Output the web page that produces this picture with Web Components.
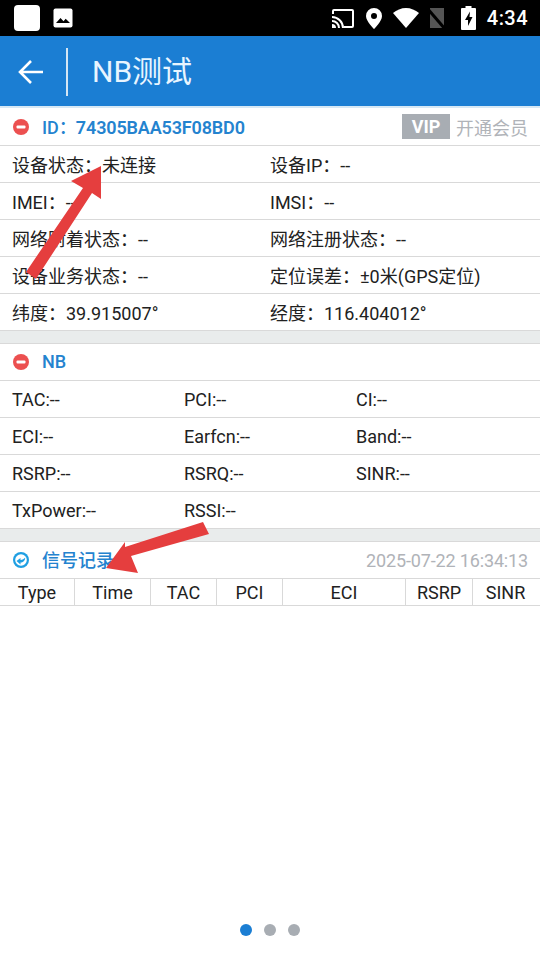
<!DOCTYPE html>
<html lang="zh">
<head>
<meta charset="utf-8">
<title>NB测试</title>
<style>
    html, body { margin: 0; padding: 0; background: #fff; }
    body {
        position: relative;
        width: 540px;
        height: 960px;
        overflow: hidden;
        font-family: Roboto, "Noto Sans CJK SC", sans-serif;
    }
    nb-page { height: 960px; }
    .num { letter-spacing: -.15px; margin-left: -1px; font-weight: 600; }
</style>
</head>
<body>
<nb-page>
    <status-bar></status-bar>
    <app-bar>NB测试</app-bar>

    <section-head icon="minus" style="height:38px">
        ID：<span class="num">74305BAA53F08BD0</span>
        <vip-tag slot="end"></vip-tag>
    </section-head>
    <info-row cols="2"><span>设备状态：未连接</span><span>设备IP：--</span></info-row>
    <info-row cols="2"><span>IMEI：--</span><span>IMSI：--</span></info-row>
    <info-row cols="2"><span>网络附着状态：--</span><span>网络注册状态：--</span></info-row>
    <info-row cols="2"><span>设备业务状态：--</span><span>定位误差：±0米(GPS定位)</span></info-row>
    <info-row cols="2"><span>纬度：39.915007°</span><span>经度：116.404012°</span></info-row>
    <section-gap></section-gap>

    <section-head icon="minus">NB</section-head>
    <info-row cols="3"><span>TAC:--</span><span>PCI:--</span><span>CI:--</span></info-row>
    <info-row cols="3"><span>ECI:--</span><span>Earfcn:--</span><span>Band:--</span></info-row>
    <info-row cols="3"><span>RSRP:--</span><span>RSRQ:--</span><span>SINR:--</span></info-row>
    <info-row cols="3"><span>TxPower:--</span><span>RSSI:--</span></info-row>
    <section-gap></section-gap>

    <section-head icon="refresh">信号记录<span slot="end" class="stamp">2025-07-22 16:34:13</span></section-head>
    <record-table></record-table>

    <page-dots></page-dots>
</nb-page>
<red-arrows></red-arrows>

<script>
class NbPage extends HTMLElement {
    connectedCallback() {
        this.attachShadow({ mode: 'open' });
        this.shadowRoot.innerHTML = `
            <style>
                :host { display: flex; flex-direction: column; }
                ::slotted(page-dots) { margin-top: auto; }
            </style>
            <slot></slot>`;
    }
}

class StatusBar extends HTMLElement {
    connectedCallback() {
        this.attachShadow({ mode: 'open' });
        this.shadowRoot.innerHTML = `
            <style>
                :host {
                    display: flex;
                    align-items: center;
                    height: 36px;
                    flex: none;
                    background: #000;
                    color: #fff;
                    padding: 0 12px 0 14px;
                    box-sizing: border-box;
                }
                .app { width: 26px; height: 26px; border-radius: 4px; background: #fff; margin-right: 13px; }
                svg { display: block; flex: none; }
                .spacer { flex: 1; }
                .time { font: 500 20px Roboto, sans-serif; margin-left: 11px; letter-spacing: .45px; }
            </style>
            <div class="app"></div>
            <svg width="20" height="20" viewBox="0 0 20 20">
                <rect x="0.5" y="0.5" width="19" height="19" rx="2" fill="#fff"/>
                <path d="M3 15l4.5-5 3 3.2 2.2-2.4L17 15z" fill="#000"/>
            </svg>
            <div class="spacer"></div>
            <svg width="22" height="19" viewBox="0 0 22 19" style="margin-right:12px">
                <path d="M2 0h18a2 2 0 0 1 2 2v15a2 2 0 0 1-2 2h-8v-2h8V2H2v3H0V2a2 2 0 0 1 2-2z" fill="#fff"/>
                <path d="M0 7a12 12 0 0 1 12 12H10A10 10 0 0 0 0 9zM0 11a8 8 0 0 1 8 8H6a6 6 0 0 0-6-6zM0 15a4 4 0 0 1 4 4H0z" fill="#fff"/>
            </svg>
            <svg width="16" height="21" viewBox="0 0 16 21" style="margin-right:11px">
                <path fill-rule="evenodd" d="M8 0a8 8 0 0 0-8 8c0 5.500 8 13 8 13s8-7.500 8-13a8 8 0 0 0-8-8zm0 5a3 3 0 1 1 0 6 3 3 0 0 1 0-6z" fill="#fff"/>
            </svg>
            <svg width="26" height="20" viewBox="0 0 26 20" style="margin-right:9px">
                <path d="M13 20L0 5C3.600 2 8.200 0 13 0s9.400 2 13 5z" fill="#fff"/>
            </svg>
            <svg width="18" height="20" viewBox="0 0 18 20" style="margin-right:15px">
                <path d="M2 0h14v20H2z" fill="#555"/>
                <path d="M-1 0L17 21" stroke="#000" stroke-width="3"/>
            </svg>
            <svg width="15" height="24" viewBox="0 0 15 24">
                <path fill-rule="evenodd" d="M4.500 0h6v2H14a1 1 0 0 1 1 1v20a1 1 0 0 1-1 1H1a1 1 0 0 1-1-1V3a1 1 0 0 1 1-1h3.500zM9 5.500L4 14h3v6l4.500-9H8.500z" fill="#fff"/>
            </svg>
            <span class="time">4:34</span>`;
    }
}

class AppBar extends HTMLElement {
    connectedCallback() {
        this.attachShadow({ mode: 'open' });
        this.shadowRoot.innerHTML = `
            <style>
                :host {
                    display: flex;
                    align-items: center;
                    height: 72px;
                    flex: none;
                    box-sizing: border-box;
                    background: #1b7ed3;
                    border-bottom: 2px solid #d6e8f5;
                    color: #e8f5ff;
                    padding: 2px 0 0 18px;
                }
                svg { display: block; }
                .divider { width: 2px; height: 48px; background: #d4e6f4; margin: 0 24px 0 22px; }
                .title { font-size: 30px; line-height: 34px; }
            </style>
            <svg width="26" height="26" viewBox="0 0 26 26" fill="none" stroke="#fff" stroke-width="2.600">
                <path d="M25 13H2M13 2L2 13l11 11"/>
            </svg>
            <div class="divider"></div>
            <div class="title"><slot></slot></div>`;
    }
}

class SectionHead extends HTMLElement {
    connectedCallback() {
        const icons = {
            minus: `<circle cx="8" cy="8" r="8" fill="#ec5050"/><rect x="3.500" y="6.500" width="9" height="3" rx="1" fill="#fff"/>`,
            refresh: `<circle cx="8" cy="8" r="8" fill="#1f9fe2"/>
                <circle cx="8" cy="8" r="5.800" fill="#fff"/>
                <path d="M3.500 9L7.500 6V8C9.500 8 11 7 12.200 5.500C12.200 9 10 10.500 7.500 10.500V12.500z" fill="#1f9fe2"/>`
        };
        this.attachShadow({ mode: 'open' });
        this.shadowRoot.innerHTML = `
            <style>
                :host {
                    display: flex;
                    align-items: center;
                    height: 37px;
                    flex: none;
                    box-sizing: border-box;
                    border-bottom: 1px solid #d9d9d9;
                    padding: 0 12px 0 13px;
                    color: #2483cf;
                    font-size: 18px;
                    font-weight: 500;
                }
                svg { display: block; margin-right: 13px; flex: none; }
                .label { flex: 1; white-space: nowrap; padding-bottom: 2px; }
                ::slotted(.stamp) { color: #b0b3b8; font-size: 18px; font-weight: 400; letter-spacing: -.15px; }
            </style>
            <svg width="16" height="16" viewBox="0 0 16 16">${icons[this.getAttribute('icon')]}</svg>
            <div class="label"><slot></slot></div>
            <slot name="end"></slot>`;
    }
}

class VipTag extends HTMLElement {
    connectedCallback() {
        this.attachShadow({ mode: 'open' });
        this.shadowRoot.innerHTML = `
            <style>
                :host { display: flex; align-items: center; gap: 6px; font-weight: 400; color: #b0b3b8; font-size: 18px; }
                .vip {
                    background: #a8adb3;
                    color: #fff;
                    font-weight: 700;
                    font-size: 18px;
                    width: 48px;
                    height: 25px;
                    line-height: 25px;
                    text-align: center;
                }
            </style>
            <span class="vip">VIP</span><span>开通会员</span>`;
    }
}

class InfoRow extends HTMLElement {
    connectedCallback() {
        const cols = this.getAttribute('cols') === '3' ? '172px 172px 1fr' : '258px 1fr';
        this.attachShadow({ mode: 'open' });
        this.shadowRoot.innerHTML = `
            <style>
                :host {
                    display: grid;
                    grid-template-columns: ${cols};
                    align-items: center;
                    height: 37px;
                    flex: none;
                    box-sizing: border-box;
                    border-bottom: 1px solid #d9d9d9;
                    padding-left: 12px;
                    color: #212121;
                    font-size: 18px;
                    white-space: nowrap;
                }
            </style>
            <slot></slot>`;
    }
}

class SectionGap extends HTMLElement {
    connectedCallback() {
        this.attachShadow({ mode: 'open' });
        this.shadowRoot.innerHTML = `
            <style>
                :host {
                    display: block;
                    height: 13px;
                    flex: none;
                    box-sizing: border-box;
                    background: #e9ecec;
                    border-bottom: 1px solid #d9d9d9;
                }
            </style>`;
    }
}

class RecordTable extends HTMLElement {
    connectedCallback() {
        const heads = ['Type', 'Time', 'TAC', 'PCI', 'ECI', 'RSRP', 'SINR'];
        this.attachShadow({ mode: 'open' });
        this.shadowRoot.innerHTML = `
            <style>
                :host {
                    display: grid;
                    grid-template-columns: 75px 76px 66px 66px 123px 67px 1fr;
                    height: 27px;
                    flex: none;
                    box-sizing: border-box;
                    border-bottom: 1px solid #d9d9d9;
                    color: #212121;
                    font-size: 18px;
                }
                div {
                    display: flex;
                    align-items: center;
                    justify-content: center;
                    border-right: 1px solid #d9d9d9;
                }
                div:last-child { border-right: 0; padding-right: 2px; }
            </style>
            ${heads.map(h => `<div>${h}</div>`).join('')}`;
    }
}

class PageDots extends HTMLElement {
    connectedCallback() {
        this.attachShadow({ mode: 'open' });
        this.shadowRoot.innerHTML = `
            <style>
                :host { display: flex; justify-content: center; gap: 12px; padding-bottom: 24px; flex: none; }
                i { width: 12px; height: 12px; border-radius: 50%; background: #a8adb3; }
                i:first-of-type { background: #1b7ed3; }
            </style>
            <i></i><i></i><i></i>`;
    }
}

// annotation arrows drawn over the screenshot
class RedArrows extends HTMLElement {
    connectedCallback() {
        this.attachShadow({ mode: 'open' });
        this.shadowRoot.innerHTML = `
            <style>
                :host { position: absolute; inset: 0; pointer-events: none; }
                svg { display: block; }
            </style>
            <svg width="540" height="960" viewBox="0 0 540 960" fill="#e53e3e">
                <path d="M101 166L71 181 83 188 26 272 36 279 92 193 101 199z"/>
                <path d="M106 568L138 573 131 556 209 534 203 522 125 547 125 542z"/>
            </svg>`;
    }
}

customElements.define('nb-page', NbPage);
customElements.define('status-bar', StatusBar);
customElements.define('app-bar', AppBar);
customElements.define('section-head', SectionHead);
customElements.define('vip-tag', VipTag);
customElements.define('info-row', InfoRow);
customElements.define('section-gap', SectionGap);
customElements.define('record-table', RecordTable);
customElements.define('page-dots', PageDots);
customElements.define('red-arrows', RedArrows);
</script>
</body>
</html>
